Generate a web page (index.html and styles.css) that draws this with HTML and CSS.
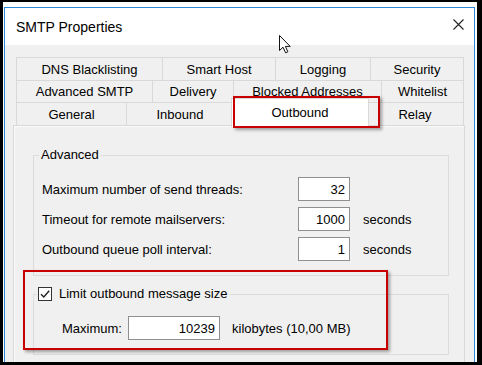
FILE: index.html
```html
<!DOCTYPE html>
<html lang="en">
<head>
  <meta charset="UTF-8" />
  <title>SMTP Properties</title>
  <link rel="stylesheet" href="styles.css">
</head>
<body>
  <div class="shot">
    <div class="window">
      <div class="titlebar">
        <span class="title">SMTP Properties</span>
        <svg class="close" width="11" height="11" viewBox="0 0 11 11">
          <path d="M0.5 0.5 L10.5 10.5 M10.5 0.5 L0.5 10.5" stroke="#222" stroke-width="1.1" fill="none" />
        </svg>
      </div>

      <div class="dialog">
        <div class="tabs">
          <div class="tabrow">
            <div class="tab w-dns">DNS Blacklisting</div>
            <div class="tab w-smarthost">Smart Host</div>
            <div class="tab w-logging">Logging</div>
            <div class="tab w-security">Security</div>
          </div>
          <div class="tabrow row-mid">
            <div class="tab w-advsmtp">Advanced SMTP</div>
            <div class="tab w-delivery">Delivery</div>
            <div class="tab w-blocked">Blocked Addresses</div>
            <div class="tab w-whitelist">Whitelist</div>
          </div>
          <div class="tabrow row-front">
            <div class="tab w-general">General</div>
            <div class="tab w-inbound">Inbound</div>
            <div class="tab w-outbound selected">Outbound</div>
            <div class="tab w-relay">Relay</div>
          </div>
        </div>

        <div class="panel">
          <fieldset class="group group-advanced">
            <legend class="group-title">Advanced</legend>
            <div class="field">
              <label class="field-label">Maximum number of send threads:</label>
              <input class="num" type="text" value="32" readonly>
            </div>
            <div class="field">
              <label class="field-label">Timeout for remote mailservers:</label>
              <input class="num" type="text" value="1000" readonly>
              <span class="unit">seconds</span>
            </div>
            <div class="field">
              <label class="field-label">Outbound queue poll interval:</label>
              <input class="num" type="text" value="1" readonly>
              <span class="unit">seconds</span>
            </div>
          </fieldset>

          <fieldset class="group group-limit">
            <legend class="check-title">
              <span class="checkbox">
                <svg width="12" height="12" viewBox="0 0 12 12">
                  <path d="M2 6.2 L4.8 9 L10.2 2.8" stroke="#222" stroke-width="1.4" fill="none" />
                </svg>
              </span>
              Limit outbound message size
            </legend>
            <div class="field field-max">
              <label class="max-label">Maximum:</label>
              <input class="num num-wide" type="text" value="10239" readonly>
              <span class="unit">kilobytes (10,00 MB)</span>
            </div>
          </fieldset>
        </div>
      </div>
    </div>

    <div class="mark mark-tab"></div>
    <div class="mark mark-limit"></div>

    <svg class="cursor" width="13" height="19" viewBox="0 0 13 19">
      <path d="M0.5 0.5 L0.5 15.5 L4 12.2 L6.6 17.8 L8.9 16.8 L6.4 11.4 L11.2 11.4 Z" fill="#fff" stroke="#111" stroke-width="1" stroke-linejoin="miter" />
    </svg>
  </div>
</body>
</html>
```

FILE: styles.css
```css
* {
  box-sizing: border-box;
  margin: 0;
  padding: 0;
}

body {
  width: 482px;
  height: 365px;
  background: #000;
  overflow: hidden;
  font-family: 'Liberation Sans', Arial, sans-serif;
  font-size: 13px;
  color: #000;
}

.shot {
  position: relative;
  margin: 2px 0 0 3px;
  width: 474px;
  height: 360px;
  background: #fff;
  padding: 5px 0 0 1px;
  overflow: hidden;
}

.window {
  width: 471px;
  height: 355px;
  border: 1px solid #2b87d8;
  border-bottom: none;
  display: flex;
  flex-direction: column;
  background: #f0f0f0;
}

/* title bar */
.titlebar {
  height: 37px;
  background: #fff;
  display: flex;
  align-items: center;
  padding-left: 11px;
}

.title {
  flex: 1;
  font-size: 14px;
  padding-top: 1px;
}

.close {
  align-self: flex-start;
  margin-top: 11px;
  margin-right: 10px;
}

/* dialog body */
.dialog {
  flex: 1;
  display: flex;
  flex-direction: column;
  padding: 12px 0 0 8px;
}

.tabs {
  margin-left: 3px;
}

.tabrow {
  display: flex;
  height: 23px;
}

.row-mid {
  height: 22px;
}

.row-front {
  align-items: flex-end;
}

.tab {
  height: 100%;
  margin-left: -1px;
  border: 1px solid #d9d9d9;
  border-bottom: none;
  background: #f0f0f0;
  display: flex;
  align-items: center;
  justify-content: center;
  white-space: nowrap;
}

.tab:first-child {
  margin-left: 0;
}

.tab.selected {
  position: relative;
  z-index: 1;
  height: 29px;
  margin: 0 -2px -2px -3px;
  background: #fff;
  padding-bottom: 2px;
}

.w-dns { width: 147px; }
.w-smarthost { width: 114px; }
.w-logging { width: 96px; }
.w-security { width: 94px; }
.w-advsmtp { width: 137px; }
.w-delivery { width: 82px; }
.w-blocked { width: 149px; }
.w-whitelist { width: 83px; }
.w-general { width: 111px; }
.w-inbound { width: 108px; }
.w-outbound { width: 138px; }
.w-relay { width: 98px; }

/* tab page */
.panel {
  flex: 1;
  width: 452px;
  border: 1px solid #d9d9d9;
  border-bottom: none;
  box-shadow: inset 1px 1px 0 #fbfbfb;
  padding: 21px 15px 0 19px;
  display: flex;
  flex-direction: column;
  gap: 10px;
}

.group {
  border: 1px solid #dcdcdc;
  padding: 14px 8px 14px 8px;
  display: flex;
  flex-direction: column;
  gap: 6px;
}

.group-title {
  line-height: 16px;
  padding: 0 2px;
  margin-left: -3px;
}

.check-title {
  display: flex;
  align-items: center;
  gap: 7px;
  line-height: 16px;
  margin-left: -5px;
  padding: 0 3px 0 1px;
}

.checkbox {
  width: 14px;
  height: 14px;
  border: 1px solid #333;
  background: #fff;
  display: flex;
  align-items: center;
  justify-content: center;
}

.field {
  display: flex;
  align-items: center;
  height: 24px;
}

.field-label {
  width: 256px;
}

.num {
  width: 52px;
  height: 24px;
  border: 1px solid #8f8f8f;
  background: #fff;
  font: inherit;
  color: #000;
  text-align: right;
  padding-right: 4px;
  outline: none;
}

.num-wide {
  width: 92px;
}

.unit {
  margin-left: 13px;
}

.field-max {
  margin-left: 20px;
}

.max-label {
  width: 66px;
}

.field-max .unit {
  margin-left: 12px;
}

/* annotation boxes */
.mark {
  position: absolute;
  border: 2px solid #c80000;
  box-shadow: 2px 2px 3px rgba(0, 0, 0, 0.35);
  z-index: 2;
}

.mark-tab {
  left: 230px;
  top: 94px;
  width: 147px;
  height: 32px;
}

.mark-limit {
  left: 20px;
  top: 268px;
  width: 365px;
  height: 80px;
}

.cursor {
  position: absolute;
  left: 276px;
  top: 33px;
  z-index: 3;
}
```
